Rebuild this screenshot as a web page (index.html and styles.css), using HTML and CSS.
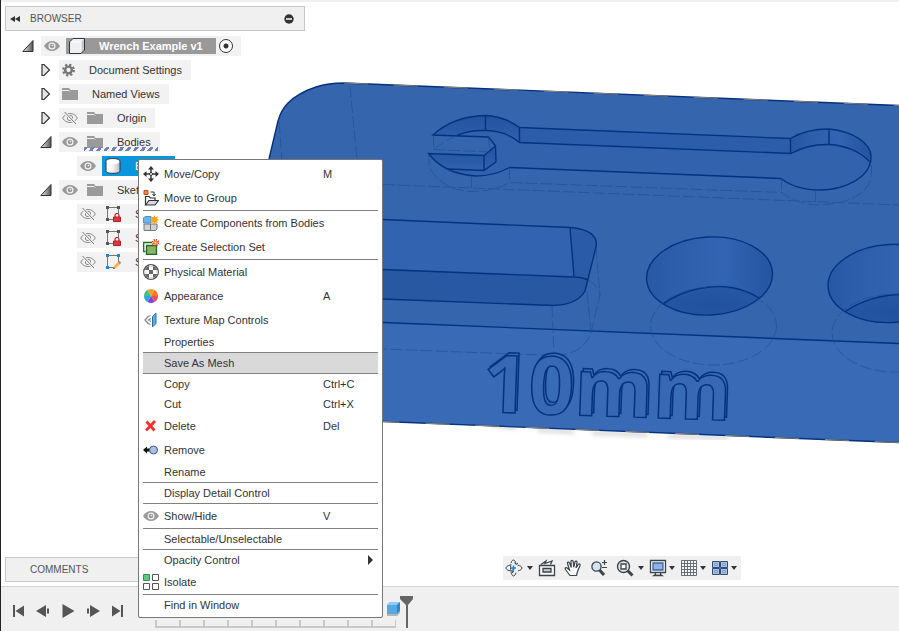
FILE: index.html
```
<!DOCTYPE html>
<html lang="en">
<head>
  <meta charset="UTF-8" />
  <meta name="viewport" content="width=device-width, initial-scale=1.0"/>
  <title>Wrench Example v1</title>
  <link rel="stylesheet" href="styles.css">
</head>
<body>

  <!-- shared icons -->
  <svg class="defs" aria-hidden="true">
    <symbol id="eye" viewBox="0 0 16 16">
      <path d="M0 8C2 4.600 5 3 8 3s6 1.600 8 5c-2 3.400-5 5-8 5S2 11.400 0 8z" fill="#9a9a9a"/>
      <circle cx="8" cy="8" r="3.500" fill="#f2f2f2"/>
      <circle cx="8" cy="8" r="2.300" fill="#9a9a9a"/>
      <circle cx="8.500" cy="7.500" r=".8" fill="#f2f2f2"/>
    </symbol>
    <symbol id="eye-off" viewBox="0 0 16 16">
      <path d="M.6 8C2.500 4.900 5 3.500 8 3.500s5.500 1.400 7.400 4.500c-1.900 3.100-4.400 4.500-7.400 4.500S2.500 11.100.6 8z" fill="none" stroke="#8c8c8c"/>
      <circle cx="8" cy="8" r="2.700" fill="none" stroke="#8c8c8c"/>
      <path d="M2.500 2l11.500 12" stroke="#f2f2f2" stroke-width="2.600"/>
      <path d="M2.500 2l11.500 12" stroke="#777"/>
    </symbol>
    <symbol id="folder" viewBox="0 0 16 16">
      <path d="M0 2h7l1.500 2H16v10H0z" fill="#9a9a9a"/>
      <path d="M0 4.500h7l1 1" fill="none" stroke="#f2f2f2"/>
    </symbol>
    <symbol id="closed" viewBox="0 0 12 14">
      <path d="M2 1.500h2L9.500 7 4 12.500H2z" fill="#e4e4ea" stroke="#333" stroke-width="1.200"/>
    </symbol>
    <symbol id="open" viewBox="0 0 12 14">
      <path d="M11 1.500v11H.8z" fill="url(#gOpen)" stroke="#333"/>
    </symbol>
    <symbol id="sketch" viewBox="0 0 16 18">
      <path d="M4 2.500h8M2.500 4v9M13.500 4v5M4 14.500h4" stroke="#777" fill="none"/>
      <path d="M1 1h3v3H1zM12 1h3v3h-3zM1 13h3v3H1z" fill="#555"/>
    </symbol>
    <symbol id="lock" viewBox="0 0 8 9">
      <path d="M2 4V2.500a2 2 0 0 1 4 0V4" fill="none" stroke="#c8202c" stroke-width="1.200"/>
      <path d="M.5 4h7v4.500h-7z" fill="#d93a40" stroke="#b81c26"/>
    </symbol>
    <symbol id="down" viewBox="0 0 6 4"><path d="M0 0h6L3 4z" fill="#333"/></symbol>
    <defs>
      <linearGradient id="gOpen"><stop offset="0" stop-color="#eee"/><stop offset="1" stop-color="#555"/></linearGradient>
      <linearGradient id="gCyl"><stop offset="0" stop-color="#fff"/><stop offset=".5" stop-color="#f4f4f4"/><stop offset="1" stop-color="#b9bcc4"/></linearGradient>
    </defs>
  </svg>

  <div class="app">

    <!-- tool holder body -->
    <svg class="model" viewBox="0 0 899 631" preserveAspectRatio="xMinYMin slice" role="img" aria-label="Tool holder, 10mm wrench">
      <defs>
        <linearGradient id="hole">
          <stop offset="0" stop-color="#2456a2"/><stop offset=".25" stop-color="#2d5eac"/>
          <stop offset=".6" stop-color="#3164b2"/><stop offset="1" stop-color="#2252a0"/>
        </linearGradient>
        <linearGradient id="jaw" x1="0" y1="0" x2="0" y2="1">
          <stop offset="0" stop-color="#2252a0"/><stop offset="1" stop-color="#3062b0"/>
        </linearGradient>
        <radialGradient id="floor"><stop offset="0" stop-color="#2051a0"/><stop offset="1" stop-color="#2758a4"/></radialGradient>
        <filter id="soft"><feGaussianBlur stdDeviation="2"/></filter>
        <clipPath id="c1"><ellipse cx="709.500" cy="276" rx="63" ry="39" transform="rotate(-3 709.500 276)"/></clipPath>
        <clipPath id="c2"><ellipse cx="891" cy="283.500" rx="63" ry="39" transform="rotate(-3 891 283.500)"/></clipPath>
      </defs>

      <path d="M490 425l26 3M538 430l36 2M592 433l56 2M668 436l60 2" stroke="#ccc" stroke-width="3" filter="url(#soft)"/>
      <path d="M269 159L278 121Q281 110 288 103Q298 93 316 87Q328 83 344 83L899 105.500V442.500L383 421.500 220 415V359z" fill="#3565ad"/>
      <path d="M200 315L383 322.500 899 343.500V442.500L383 421.500 220 415z" fill="#386ab5"/>

      <!-- wrench pocket -->
      <path class="pocket" d="M433 135Q454 116 485 115.500Q504 116 519.500 127.500L790.500 138.500Q806 129 829 129C852 131 872 143 871 158C870 179 842 190 820 190Q796 190 781 178.500L509.500 167.500Q494 176 476 176Q444 174 428.500 153.500L484 155.500 495.500 146 488.500 137z"/>
      <path d="M433 135Q454 116 485 115.500Q504 116 519.500 127.500V142.500Q506 131 486 130.500Q468 130 457 135.500z" fill="url(#jaw)"/>
      <path d="M519.500 127.500L790.500 138.500V153.500L519.500 142.500z" fill="#2c5dab"/>
      <path d="M790.500 138.500Q806 129 829 129C852 131 872 143 871 161Q855 144 829 144.500Q808 144 791 153.500z" fill="url(#hole)"/>
      <path d="M433 135L488.500 137 495.500 146 484 155.500 428.500 153.500z" fill="#3565ad"/>
      <path d="M428.500 153.500L484 155.500 495.500 146 496 162 484 170.500 448 169Q437 164 428.500 153.500z" fill="url(#jaw)"/>
      <g class="edge">
        <path d="M433 135Q454 116 485 115.500Q504 116 519.500 127.500L790.500 138.500Q806 129 829 129C852 131 872 143 871 158C870 179 842 190 820 190Q796 190 781 178.500L509.500 167.500Q494 176 476 176Q444 174 428.500 153.500L484 155.500 495.500 146 488.500 137z"/>
        <path d="M457 135.500Q468 130 486 130.500Q506 131 519.500 142.500L791 153.500Q808 144 829 144.500Q855 146 870 162"/>
        <path d="M485.500 116V130M519.500 127.500V142.500M790.500 138.500V153.500M829 129V144.500M495.500 146L496 162 484 170.500 448 169M484 155.500V170.500"/>
      </g>

      <!-- long slot -->
      <path d="M300 216.500L383 219.500 570 227.500Q599 230 596 247L588 279L585 291Q577 305 553 305.500L383 299 300 296z" fill="#3263b0"/>
      <path d="M570 227.500Q599 230 596 247L588 280 574 277z" fill="#2a5ba8"/>
      <path d="M300 266L383 269.500 574 277Q582 277 588 280L585 291Q577 305 553 305.500L383 299 300 296z" fill="#2858a2"/>
      <g class="edge">
        <path d="M300 216.500L383 219.500 570 227.500Q599 230 596 247L588 279 585 291Q577 305 553 305.500L383 299"/>
        <path d="M383 269.500L574 277Q582 277 588 280M570 227.500L574 277"/>
        <path d="M383 322.500L899 343.500"/>
      </g>

      <!-- round holes -->
      <g clip-path="url(#c1)">
        <path d="M640 230h140v90H640z" fill="url(#hole)"/>
        <path class="hole-floor" d="M650 315Q677 288 717 286.500Q748 286 772 308V325H650z"/>
      </g>
      <g clip-path="url(#c2)">
        <path d="M822 237h140v90H822z" fill="url(#hole)"/>
        <path class="hole-floor" d="M832 322Q860 296 899 294.500Q928 294 950 315V330H832z"/>
      </g>
      <g class="edge">
        <ellipse cx="709.500" cy="276" rx="63" ry="39" transform="rotate(-3 709.500 276)"/>
        <ellipse cx="891" cy="283.500" rx="63" ry="39" transform="rotate(-3 891 283.500)"/>
      </g>

      <g class="hidden-edge">
        <path d="M350 86L357 159M279 122L282 159M383 184.500L899 205"/>
        <path d="M457 135.500Q444 141 433.500 149.500V135M433.500 149.500L490 152 488.500 137"/>
        <path d="M428.500 153.500L429.500 168Q444 191 472 191.500Q494 191 510 182.500L782 192.500Q798 205 820 205Q868 202 871.500 175V160"/>
        <path d="M471.500 176V191.500M509.500 167.500V182.500M781.500 178.500V192.500M815.500 190V205"/>
        <path d="M596 247L600 295 591 333Q583 355 553 355.500L383 349M552 306L554 355M588 280Q600 286 600 297M587 292L591 333"/>
        <ellipse cx="713.500" cy="326" rx="63" ry="39"/>
        <ellipse cx="895" cy="333" rx="63" ry="39"/>
      </g>

      <g class="edge">
        <path d="M269 159L278 121Q281 110 288 103Q298 93 316 87Q328 83 344 83L899 105.500M899 442.500L383 421.500"/>
      </g>
      <path d="M344 83L899 105.500M899 442.500L383 421.500" class="rim"/>

      <!-- raised lettering: back face, then front face -->
      <g transform="rotate(2 486 411)">
        <use href="#size" x="2" y="-3"/>
        <text id="size" class="size" x="482" y="412">10mm</text>
      </g>
    </svg>

    <div class="topstrip"></div>

    <main>
      <section class="browser">
        <header class="panel-head">
          <button class="collapse" aria-label="Collapse">
            <svg width="10" height="8" viewBox="0 0 10 8"><path d="M5 1v6L0 4zM10 1v6L5 4z" fill="#333"/></svg>
          </button>
          <h2>BROWSER</h2>
          <button class="minus" aria-label="Minimize">
            <svg width="10" height="10" viewBox="0 0 10 10"><circle cx="5" cy="5" r="4.700" fill="#333"/><path d="M2 5h6" stroke="#fff" stroke-width="1.500"/></svg>
          </button>
        </header>

        <ul class="tree">
          <li class="row">
            <button class="twist" aria-label="Toggle"><svg><use href="#open"/></svg></button>
            <div class="chip">
              <svg class="ic"><use href="#eye"/></svg>
              <span class="name root">
                <svg class="ic" viewBox="0 0 16 16"><path d="M.5 4L4 .5h11.500V12L12 15.500H.5z" fill="#eef0f3"/><path d="M12 4l3.500-3.500V12L12 15.500z" fill="#c3c6cd"/><path d="M1 4h11v11" fill="none" stroke="#fff"/><path d="M.5 4L4 .5h11.500V12L12 15.500H.5z" fill="none" stroke="#333"/></svg>
                Wrench Example v1
              </span>
              <input type="radio" name="active" aria-label="Activate component" checked>
            </div>
          </li>
          <li class="row l2">
            <button class="twist" aria-label="Toggle"><svg><use href="#closed"/></svg></button>
            <div class="chip">
              <svg class="gear" viewBox="0 0 14 14"><circle cx="7" cy="7" r="3.600" fill="none" stroke="#777" stroke-width="2.600"/><circle cx="7" cy="7" r="5.700" fill="none" stroke="#777" stroke-width="2.400" stroke-dasharray="2.400 2.076"/></svg>
              <span class="label">Document Settings</span>
            </div>
          </li>
          <li class="row l2">
            <button class="twist" aria-label="Toggle"><svg><use href="#closed"/></svg></button>
            <div class="chip">
              <svg class="ic"><use href="#folder"/></svg>
              <span class="label">Named Views</span>
            </div>
          </li>
          <li class="row l2">
            <button class="twist" aria-label="Toggle"><svg><use href="#closed"/></svg></button>
            <div class="chip">
              <svg class="ic"><use href="#eye-off"/></svg>
              <span class="name"><svg class="ic"><use href="#folder"/></svg>Origin</span>
            </div>
          </li>
          <li class="row l2">
            <button class="twist" aria-label="Toggle"><svg><use href="#open"/></svg></button>
            <div class="chip">
              <svg class="ic"><use href="#eye"/></svg>
              <span class="name hatched"><svg class="ic"><use href="#folder"/></svg>Bodies</span>
            </div>
          </li>
          <li class="row l3">
            <div class="chip">
              <svg class="ic"><use href="#eye"/></svg>
              <span class="name selected">
                <svg class="ic" viewBox="0 0 16 16"><path d="M1 3.500C1 1.500 3 .7 8 .7s7 .8 7 2.800v9c0 2-2 2.800-7 2.800s-7-.8-7-2.800z" fill="url(#gCyl)" stroke="#333"/><ellipse cx="8" cy="3.800" rx="6.300" ry="2.500" fill="#fff"/></svg>
                Body1
              </span>
            </div>
          </li>
          <li class="row l2">
            <button class="twist" aria-label="Toggle"><svg><use href="#open"/></svg></button>
            <div class="chip">
              <svg class="ic"><use href="#eye"/></svg>
              <span class="name"><svg class="ic"><use href="#folder"/></svg>Sketches</span>
            </div>
          </li>
          <li class="row l3">
            <div class="chip">
              <svg class="ic"><use href="#eye-off"/></svg>
              <span class="name"><svg class="ic tall"><use href="#sketch" width="16" height="18"/><use href="#lock" x="8" y="8" width="8" height="9"/></svg>Sketch1</span>
            </div>
          </li>
          <li class="row l3">
            <div class="chip">
              <svg class="ic"><use href="#eye-off"/></svg>
              <span class="name"><svg class="ic tall"><use href="#sketch" width="16" height="18"/><use href="#lock" x="8" y="8" width="8" height="9"/></svg>Sketch2</span>
            </div>
          </li>
          <li class="row l3">
            <div class="chip">
              <svg class="ic"><use href="#eye-off"/></svg>
              <span class="name"><svg class="ic tall"><use href="#sketch" width="16" height="18"/><path d="M1 1h3v3H1zM12 1h3v3h-3zM1 13h3v3H1z" fill="#1b87d6"/><path d="M8 16l1-3 4.500-4.500 2.200 2L11 15z" fill="#f5b53c"/><path d="M13 9l1.500-1 1.500 1.500-1 1.500z" fill="#e06a6a"/><path d="M8 16l.6-2 1.400 1.400z" fill="#333"/></svg>Sketch3</span>
            </div>
          </li>
        </ul>
      </section>

      <div class="bottom">
        <section class="comments"><h2>COMMENTS</h2></section>
        <div class="nav-wrap">
          <nav class="navbar">
            <button aria-label="Orbit" class="drop">
              <svg width="18" height="18" viewBox="0 0 18 18" fill="none" stroke="#3c434c"><path d="M6 4C6.500 2 7.500 1 8.500 1s2 1.500 2.500 4M6 13c.5 2.500 1.500 4 2.500 4s2-1.500 2.500-3.500M5 6C2.500 6.700 1 7.800 1 9c0 1.700 3 3 7 3.300M12.500 6c2.800.7 4.500 1.800 4.500 3s-1.500 2.200-4 2.900M6 5c-.6 2-.6 5 0 7M7 10.500l2 1.800-2 1.700M9.500 3.500L11 5.500l2-1.500"/><path d="M8.500 6.500v5M6 9h5" stroke="#1b87d6" stroke-width="1.500"/></svg>
              <svg class="caret"><use href="#down"/></svg>
            </button>
            <button aria-label="Look At">
              <svg width="18" height="18" viewBox="0 0 18 18" fill="none" stroke="#3c434c" stroke-width="1.300"><path d="M1.500 6.500h15v10h-15z" fill="#fafafa"/><path d="M5 9.500h8v3.500H5z" fill="#ccd2da"/><path d="M3 5.500L8 2l-1 2.500L14 2l-1.500 3.500"/></svg>
            </button>
            <button aria-label="Pan">
              <svg width="18" height="18" viewBox="0 0 18 18" fill="#fff" stroke="#3c434c" stroke-width="1.200"><path d="M6 16.500L1.500 10.500C.5 9 2 8 3.200 9L5.500 11 3.500 4.500C3 3 5 2.500 5.500 4L7.300 8.500 7 2.500C7 1 9 1 9.200 2.500L9.700 8.300 11 3C11.300 1.500 13.200 2 13 3.500L12 9 14.200 5.500C15 4.300 16.500 5 16 6.500L13.500 12.500 12.500 16.500z"/></svg>
            </button>
            <button aria-label="Zoom">
              <svg width="18" height="18" viewBox="0 0 18 18" fill="none" stroke="#3c434c"><path d="M9.500 11l4.500 5" stroke-width="3"/><circle cx="6.500" cy="7.500" r="4.600" fill="#d5e3ee" stroke-width="1.300"/><path d="M12 3.500h5M14.500 1v5M12 8.500h5" stroke-width="1.200"/></svg>
            </button>
            <button aria-label="Fit" class="drop">
              <svg width="18" height="18" viewBox="0 0 18 18" fill="none" stroke="#3c434c"><path d="M11.500 11.500l5 5" stroke-width="3"/><circle cx="7.500" cy="7.500" r="6" fill="#dfe7e9" stroke-width="1.400"/><path d="M5 5h5v5H5z" fill="#fff" stroke-width="1.300"/></svg>
              <svg class="caret"><use href="#down"/></svg>
            </button>
            <button aria-label="Display Settings" class="drop tight">
              <svg width="18" height="18" viewBox="0 0 18 18" fill="none" stroke="#3c434c" stroke-width="1.300"><path d="M1.500 1.500h15v12h-15z" fill="#fff"/><path d="M4 4h10v7H4z" fill="#8fb4e3" stroke="#3f65a0"/><path d="M6.500 14v1.500l-1.500 1h8l-1.500-1V14" fill="#ddd"/></svg>
              <svg class="caret"><use href="#down"/></svg>
            </button>
            <button aria-label="Grid and Snaps" class="drop tight">
              <svg width="18" height="18" viewBox="0 0 18 18" fill="none" stroke="#666d76"><path d="M1.500 1.500h15v15h-15z" fill="#f6f6f6"/><path d="M1.500 4.500h15M1.500 7.500h15M1.500 10.500h15M1.500 13.500h15M4.500 1.500v15M7.500 1.500v15M10.500 1.500v15M13.500 1.500v15"/></svg>
              <svg class="caret"><use href="#down"/></svg>
            </button>
            <button aria-label="Viewports" class="drop tight">
              <svg width="18" height="18" viewBox="0 0 18 18" fill="#a9c3ea" stroke="#34496b"><path d="M1.500 2.500h7v6h-7zM9.500 2.500h7v6h-7zM1.500 9.500h7v6h-7zM9.500 9.500h7v6h-7z"/><path d="M3.500 4.500h3v2h-3zM11.500 4.500h3v2h-3zM3.500 11.500h3v2h-3zM11.500 11.500h3v2h-3z" stroke="#7f9fd0"/></svg>
              <svg class="caret"><use href="#down"/></svg>
            </button>
          </nav>
        </div>
      </div>
    </main>

    <footer class="timeline">
      <div class="controls">
        <button aria-label="Go to start"><svg viewBox="0 0 14 14"><path d="M2 1h2v12H2zM13 1.500v11L4.500 7z"/></svg></button>
        <button aria-label="Step back"><svg viewBox="0 0 14 14"><path d="M10 1v12L0 7zM11 4.500h2v5h-2z"/></svg></button>
        <button aria-label="Play"><svg viewBox="0 0 14 14"><path d="M1.500 0l12 7-12 7z"/></svg></button>
        <button aria-label="Step forward"><svg viewBox="0 0 14 14"><path d="M4 1v12l10-6zM1 4.500h2v5H1z"/></svg></button>
        <button aria-label="Go to end"><svg viewBox="0 0 14 14"><path d="M10 1h2v12h-2zM1 1.500v11L9.500 7z"/></svg></button>
      </div>
      <div class="track">
        <svg class="feature" viewBox="0 0 16 16"><path d="M1 4l3-3h10v9l-3 3H1z" fill="#55a8e6"/><path d="M1 4l3-3h10l-3 3z" fill="#8fcbf5"/><path d="M11 4l3-3v9l-3 3z" fill="#3186c8"/><path d="M1 13h10v2H1zM11 13l3-3v2l-3 3z" fill="#b5b5b5"/></svg>
        <svg class="marker" viewBox="0 0 14 32"><path d="M0 0h13v3L8 9v23H6V9L0 3z" fill="#666"/></svg>
      </div>
    </footer>

    <!-- context menu of the selected body -->
    <ul class="menu">
      <li><button class="tall">
        <svg class="mi" viewBox="0 0 16 16"><path d="M8 2v12M2 8h12" stroke="#333" stroke-width="1.400"/><path d="M8 0l3 3.500H5zM8 16l3-3.500H5zM0 8l3.500-3v6zM16 8l-3.500-3v6z" fill="#333"/><circle cx="8" cy="8" r="1.500" fill="#fff" stroke="#333"/></svg>
        <span>Move/Copy</span><kbd>M</kbd></button></li>
      <li><button class="tall">
        <svg class="mi" viewBox="0 0 16 16"><path d="M1 .5h4v4H1z" fill="#f08a4b" stroke="#b84c14"/><path d="M7.500 2H11v3M9.500 4L11 6l1.500-2" fill="none" stroke="#333"/><path d="M2.500 15V6.500H6L7.500 8H12v2" fill="#fff" stroke="#333" stroke-width="1.200"/><path d="M2.500 15L6 10.500h9.500L12 15z" fill="#d5dae2" stroke="#333" stroke-width="1.200"/></svg>
        <span>Move to Group</span></button></li>
      <li class="sep"></li>
      <li><button class="tall">
        <svg class="mi" viewBox="0 0 16 16"><path d="M6 9h8v5l-1.500 1.500H1V9z" fill="#d0d0d0" stroke="#777"/><path d="M7.500 9v6" stroke="#777"/><path d="M.5 3L2 1.500h6V8H.5z" fill="#69b4ea" stroke="#4a94cc"/><path d="M11.500 0l1 2.300 2.300-.8-.8 2.300 2 1-2 1 .8 2.200-2.300-.8-1 2-1-2-2.300.8.8-2.200-2-1 2-1-.8-2.300 2.300.8z" fill="#f9a51a"/></svg>
        <span>Create Components from Bodies</span></button></li>
      <li><button class="tall">
        <svg class="mi" viewBox="0 0 16 16"><path d="M2.500 12.500H.7v-9H9" fill="none" stroke="#1d6b1d" stroke-width="1.300"/><path d="M3.500 6.500h10v9h-10z" fill="#86b56a" stroke="#1d6b1d" stroke-width="1.300"/><circle cx="12.500" cy="3.500" r="2.800" fill="#fff3b0" stroke="#d4351c" stroke-width="1.800" stroke-dasharray="1.100 1.100"/><circle cx="12.500" cy="3.500" r="1.400" fill="#ffe36b" stroke="#d4571c" stroke-width=".8"/></svg>
        <span>Create Selection Set</span></button></li>
      <li class="sep"></li>
      <li><button class="tall">
        <svg class="mi" viewBox="0 0 16 16"><circle cx="8" cy="8" r="7.300" fill="#fff" stroke="#555" stroke-width="1.400"/><path d="M6 6h4v4H6zM3 3.500L6 2v4H2zM10 2l3 1.500L14 6h-4zM2 10h4v4l-3-1.500zM10 10h4l-1 2.500L10 14z" fill="#666"/><path d="M6.500 1h3v2h-3zM6.500 13h3v2h-3zM1 6.500h2v3H1zM13 6.500h2v3h-2z" fill="#ddd"/></svg>
        <span>Physical Material</span></button></li>
      <li><button class="tall">
        <svg class="mi" viewBox="0 0 16 16"><path d="M8 8L4.500 2A7 7 0 0 1 11.500 2z" fill="#f9a02b"/><path d="M8 8l3.500-6A7 7 0 0 1 15 8z" fill="#f9762b"/><path d="M8 8h7a7 7 0 0 1-3.500 6z" fill="#f4504b"/><path d="M8 8l3.500 6a7 7 0 0 1-7 0z" fill="#7a3ff0"/><path d="M8 8l-3.500 6A7 7 0 0 1 1 8z" fill="#2ba6d9"/><path d="M8 8H1a7 7 0 0 1 3.500-6z" fill="#43c07a"/></svg>
        <span>Appearance</span><kbd>A</kbd></button></li>
      <li><button class="tall">
        <svg class="mi" viewBox="0 0 16 16"><path d="M7.500 3.500L5 4.500 2 8l3 3.500 2.500 1M8 6.500L5.500 8 8 9.500" fill="none" stroke="#888" stroke-width="1.300"/><path d="M9.500 4.500L13 1v10.500L9.500 15z" fill="#5ab0e6" stroke="#2d6f9f"/></svg>
        <span>Texture Map Controls</span></button></li>
      <li><button><span>Properties</span></button></li>
      <li class="sep"></li>
      <li><button class="hover"><span>Save As Mesh</span></button></li>
      <li class="sep"></li>
      <li><button><span>Copy</span><kbd>Ctrl+C</kbd></button></li>
      <li><button><span>Cut</span><kbd>Ctrl+X</kbd></button></li>
      <li><button class="tall">
        <svg class="mi" viewBox="0 0 16 16"><path d="M3.500 3.500l8 9M12 3L3 12.500" stroke="#f23030" stroke-width="2.800"/></svg>
        <span>Delete</span><kbd>Del</kbd></button></li>
      <li><button class="tall">
        <svg class="mi" viewBox="0 0 16 16"><path d="M0 8l4-3.500v2h3v3H4v2z" fill="#111"/><circle cx="10.500" cy="8" r="4" fill="#a9c1e4" stroke="#44597c"/></svg>
        <span>Remove</span></button></li>
      <li><button><span>Rename</span></button></li>
      <li class="sep"></li>
      <li><button><span>Display Detail Control</span></button></li>
      <li class="sep"></li>
      <li><button class="tall"><svg class="mi"><use href="#eye"/></svg><span>Show/Hide</span><kbd>V</kbd></button></li>
      <li class="sep"></li>
      <li><button><span>Selectable/Unselectable</span></button></li>
      <li class="sep"></li>
      <li><button><span>Opacity Control</span><svg class="more" viewBox="0 0 5 10"><path d="M0 0l5 5-5 5z" fill="#333"/></svg></button></li>
      <li><button class="tall">
        <svg class="mi" viewBox="0 0 16 16" fill="#fff" stroke="#555"><path d="M.5.500h6v6h-6z" fill="#5cc682" stroke="#35935a"/><path d="M9.500.500h6v6h-6zM.5 9.500h6v6h-6zM9.500 9.500h6v6h-6z"/></svg>
        <span>Isolate</span></button></li>
      <li class="sep"></li>
      <li><button><span>Find in Window</span></button></li>
    </ul>

  </div>

</body>
</html>
```
FILE: styles.css
```
* { margin: 0; padding: 0; box-sizing: border-box; }
body { font-family: 'Liberation Sans', Arial, sans-serif; font-size: 11px; line-height: 16px; color: #333; background: #fff; }
ul { list-style: none; }
svg { display: block; flex: none; }
button { font: inherit; color: inherit; background: none; border: none; cursor: pointer; }
.defs { position: absolute; width: 0; height: 0; }

.app { position: relative; display: flex; flex-direction: column; min-height: 100vh; border-left: 1px solid #222; overflow: hidden; }
.topstrip { height: 2px; background: #f0f0f0; }
main { position: relative; flex: 1; display: flex; flex-direction: column; justify-content: space-between; padding: 4px 0 4px 4px; }

/* 3D view, behind the panels */
.model { position: absolute; left: -1px; top: 0; width: calc(100% + 1px); height: 100%; }
.pocket { fill: #3162ab; }
.hole-floor { fill: url(#floor); stroke: #04327f; stroke-width: 1.4; }
.edge { fill: none; stroke: #04327f; stroke-width: 1.4; }
.hidden-edge { fill: none; stroke: #1f4c93; stroke-width: 1; stroke-dasharray: 12 3; opacity: .6; }
.rim { fill: none; stroke: #8a8478; stroke-dasharray: 24 26; }
.size { font-family: 'Open Sans', 'Liberation Sans', sans-serif; font-size: 80px; font-weight: bold; fill: #3868b3; stroke: #04327f; stroke-width: 1.5; }

/* browser panel */
.panel-head { display: flex; align-items: center; width: 300px; height: 25px; padding: 0 10px 0 4px; background: #f0f0f0; border: 1px solid #c8c8c8; }
h2 { font-size: 10px; font-weight: normal; color: #555; }
.collapse { width: 20px; }
.minus { margin-left: auto; }
.tree { padding: 3px 0 0 17px; }
.row { display: flex; align-items: center; height: 24px; }
.l2 { padding-left: 18px; }
.l3 { padding-left: 55px; }
.twist { width: 19px; }
.twist svg { width: 12px; height: 14px; }
.chip { display: flex; align-items: center; height: 20px; padding-left: 3px; background: #f2f2f2; white-space: nowrap; }
.ic { width: 16px; height: 16px; }
.ic.tall { height: 18px; }
.gear { width: 13px; height: 14px; }
.label { padding: 0 9px 0 14px; }
.name { display: flex; align-items: center; gap: 14px; height: 20px; margin-left: 6px; padding: 0 9px 0 3px; }
.root { height: 16px; padding-right: 13px; background: #999; color: #fff; font-weight: bold; }
.selected { background: #0a96dc; color: #fff; }
.hatched { position: relative; }
.hatched::after { content: ''; position: absolute; left: 0; right: 2px; bottom: 1px; height: 4px; background: repeating-linear-gradient(125deg, #7184b0 0 3px, transparent 3px 6px); }
.chip input { appearance: none; width: 14px; height: 14px; margin: 0 8px 0 3px; border: 1px solid #333; border-radius: 50%; background: radial-gradient(circle, #333 0 2px, #fff 3px); }

/* comments + navigation bar */
.bottom { display: flex; align-items: flex-start; }
.comments { width: 300px; height: 25px; margin-top: 1px; padding: 4px 24px; background: #f0f0f0; border: 1px solid #c8c8c8; }
.nav-wrap { flex: 1; display: flex; justify-content: center; padding-left: 40px; }
.navbar { display: flex; align-items: center; gap: 8px; height: 24px; padding: 0 7px 0 2px; background: #f0f0f0; }
.navbar button { display: flex; align-items: center; }
.drop { gap: 4px; margin-right: -3px; }
.drop.tight { gap: 2px; }
.caret { width: 6px; height: 4px; }

/* timeline */
.timeline { position: relative; display: flex; height: 45px; padding-left: 4px; background: #f0f0f0; border-top: 1px solid #d4d4d4; }
.controls { display: flex; align-items: center; padding-top: 4px; }
.controls button { display: flex; justify-content: center; width: 25px; }
.controls svg { width: 14px; height: 14px; fill: #555; }
.track { position: relative; width: 241px; height: 8px; margin: 33px 0 0 25px; border-bottom: 2px solid #c8c8c8; background: repeating-linear-gradient(90deg, #c8c8c8 0 2px, transparent 2px 24px); }
.feature { position: absolute; right: -6px; bottom: 9px; width: 16px; height: 16px; }
.marker { position: absolute; right: -18px; bottom: -2px; width: 14px; height: 32px; }

/* context menu */
.menu { position: absolute; left: 137px; top: 159px; width: 245px; padding: 2px 4px; background: #fff; border: 1px solid #777; border-radius: 2px; }
.menu button { display: grid; grid-template-columns: 16px 1fr 55px; column-gap: 5px; align-items: center; width: 100%; height: 20px; text-align: left; }
.menu button.tall { height: 24px; }
.menu button span { grid-column: 2; grid-row: 1; white-space: nowrap; }
.menu button:hover, .menu .hover { background: #d9d9d9; }
.mi { grid-column: 1; grid-row: 1; width: 16px; height: 16px; }
.menu kbd { grid-column: 3; grid-row: 1; font: inherit; }
.sep { height: 1px; background: #808080; }
.more { grid-column: 3; grid-row: 1; width: 5px; height: 10px; justify-self: end; margin-right: 5px; }
```
